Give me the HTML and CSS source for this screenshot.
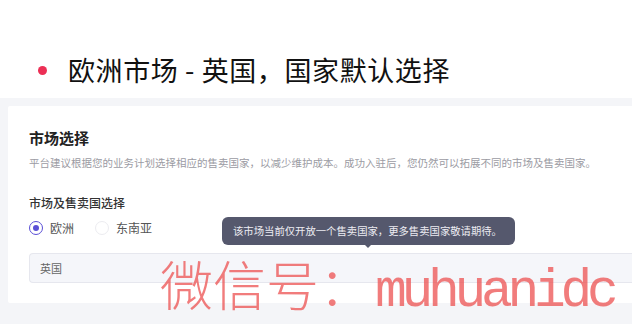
FILE: index.html
```html
<!DOCTYPE html>
<html lang="zh-CN">
<head>
<meta charset="utf-8">
<link rel="stylesheet" href="styles.css">
</head>
<body>
<div class="hero">
  <span class="dot"></span>
  <h1 class="hero-title">欧洲市场 - 英国，国家默认选择</h1>
</div>
<div class="panel">
  <div class="card">
    <h2 class="card-title">市场选择</h2>
    <p class="card-desc">平台建议根据您的业务计划选择相应的售卖国家，以减少维护成本。成功入驻后，您仍然可以拓展不同的市场及售卖国家。</p>
    <div class="field-label">市场及售卖国选择</div>
    <div class="radios">
      <label class="radio checked"><span class="circle"></span><span class="radio-text">欧洲</span></label>
      <label class="radio"><span class="circle"></span><span class="radio-text">东南亚</span></label>
    </div>
    <div class="select">英国</div>
    <div class="tooltip">该市场当前仅开放一个售卖国家，更多售卖国家敬请期待。<span class="arrow"></span></div>
  </div>
</div>
<div class="watermark">微信号：<span class="wm-latin">muhuanidc</span></div>
</body>
</html>
```
FILE: styles.css
```css
* { box-sizing: border-box; }
html, body { margin: 0; padding: 0; }
body {
  width: 632px;
  height: 324px;
  overflow: hidden;
  background: #ffffff;
  font-family: "Noto Sans CJK SC", "Noto Sans", sans-serif;
  position: relative;
}
.hero {
  height: 98px;
  display: flex;
  align-items: center;
  padding-left: 38px;
  padding-top: 42px;
}
.dot {
  width: 9px;
  height: 9px;
  border-radius: 50%;
  background: #ec2f55;
  flex: none;
}
.hero-title {
  margin: 0 0 0 21px;
  font-size: 27px;
  font-weight: 400;
  color: #111;
  line-height: 34px;
  letter-spacing: 0.6px;
}
.panel {
  background: #f4f5f8;
  padding: 8px 0 21px 8px;
}
.card {
  position: relative;
  background: #ffffff;
  padding: 22px 0 20px 21px;
  border-radius: 2px 0 0 2px;
}
.card-title {
  margin: 0;
  font-size: 15px;
  font-weight: 700;
  line-height: 20px;
  color: #222;
}
.card-desc {
  margin: 7px 0 0 0;
  font-size: 10.5px;
  line-height: 16px;
  color: #9b9ba3;
  white-space: nowrap;
}
.field-label {
  margin-top: 24px;
  font-size: 12px;
  line-height: 16px;
  color: #333;
  font-weight: 500;
}
.radios {
  margin-top: 9px;
  display: flex;
  align-items: center;
  gap: 21px;
  height: 16px;
}
.radio {
  display: flex;
  align-items: center;
  gap: 7px;
}
.circle {
  width: 14px;
  height: 14px;
  border-radius: 50%;
  border: 1px solid #ececf0;
  background: #fff;
  display: flex;
  align-items: center;
  justify-content: center;
}
.radio.checked .circle {
  border-color: #5a4fd6;
}
.radio.checked .circle::after {
  content: "";
  width: 6px;
  height: 6px;
  border-radius: 50%;
  background: #5a4fd6;
}
.radio-text {
  font-size: 12px;
  line-height: 16px;
  color: #555;
}
.select {
  margin-top: 17px;
  height: 30px;
  background: #f5f6fa;
  border: 1px solid #e6e7ee;
  border-right: none;
  border-radius: 4px 0 0 4px;
  padding-left: 10px;
  display: flex;
  align-items: center;
  font-size: 11px;
  color: #666;
}
.tooltip {
  position: absolute;
  left: 214px;
  top: 111px;
  width: 293px;
  height: 28px;
  background: #55586d;
  border-radius: 6px;
  color: #ececf2;
  font-size: 10.35px;
  line-height: 28px;
  padding-left: 11px;
  white-space: nowrap;
}
.arrow {
  position: absolute;
  left: 143px;
  bottom: -3px;
  width: 0;
  height: 0;
  border-left: 3px solid transparent;
  border-right: 3px solid transparent;
  border-top: 3px solid #55586d;
}
.watermark {
  position: absolute;
  left: 160px;
  top: 253px;
  font-size: 53px;
  line-height: 60px;
  font-weight: 300;
  color: rgba(236, 80, 80, 0.75);
  white-space: nowrap;
  pointer-events: none;
}
.wm-latin {
  font-family: "Liberation Mono", monospace;
  font-weight: 400;
  letter-spacing: -5.3px;
  margin-left: 3px;
}
```
